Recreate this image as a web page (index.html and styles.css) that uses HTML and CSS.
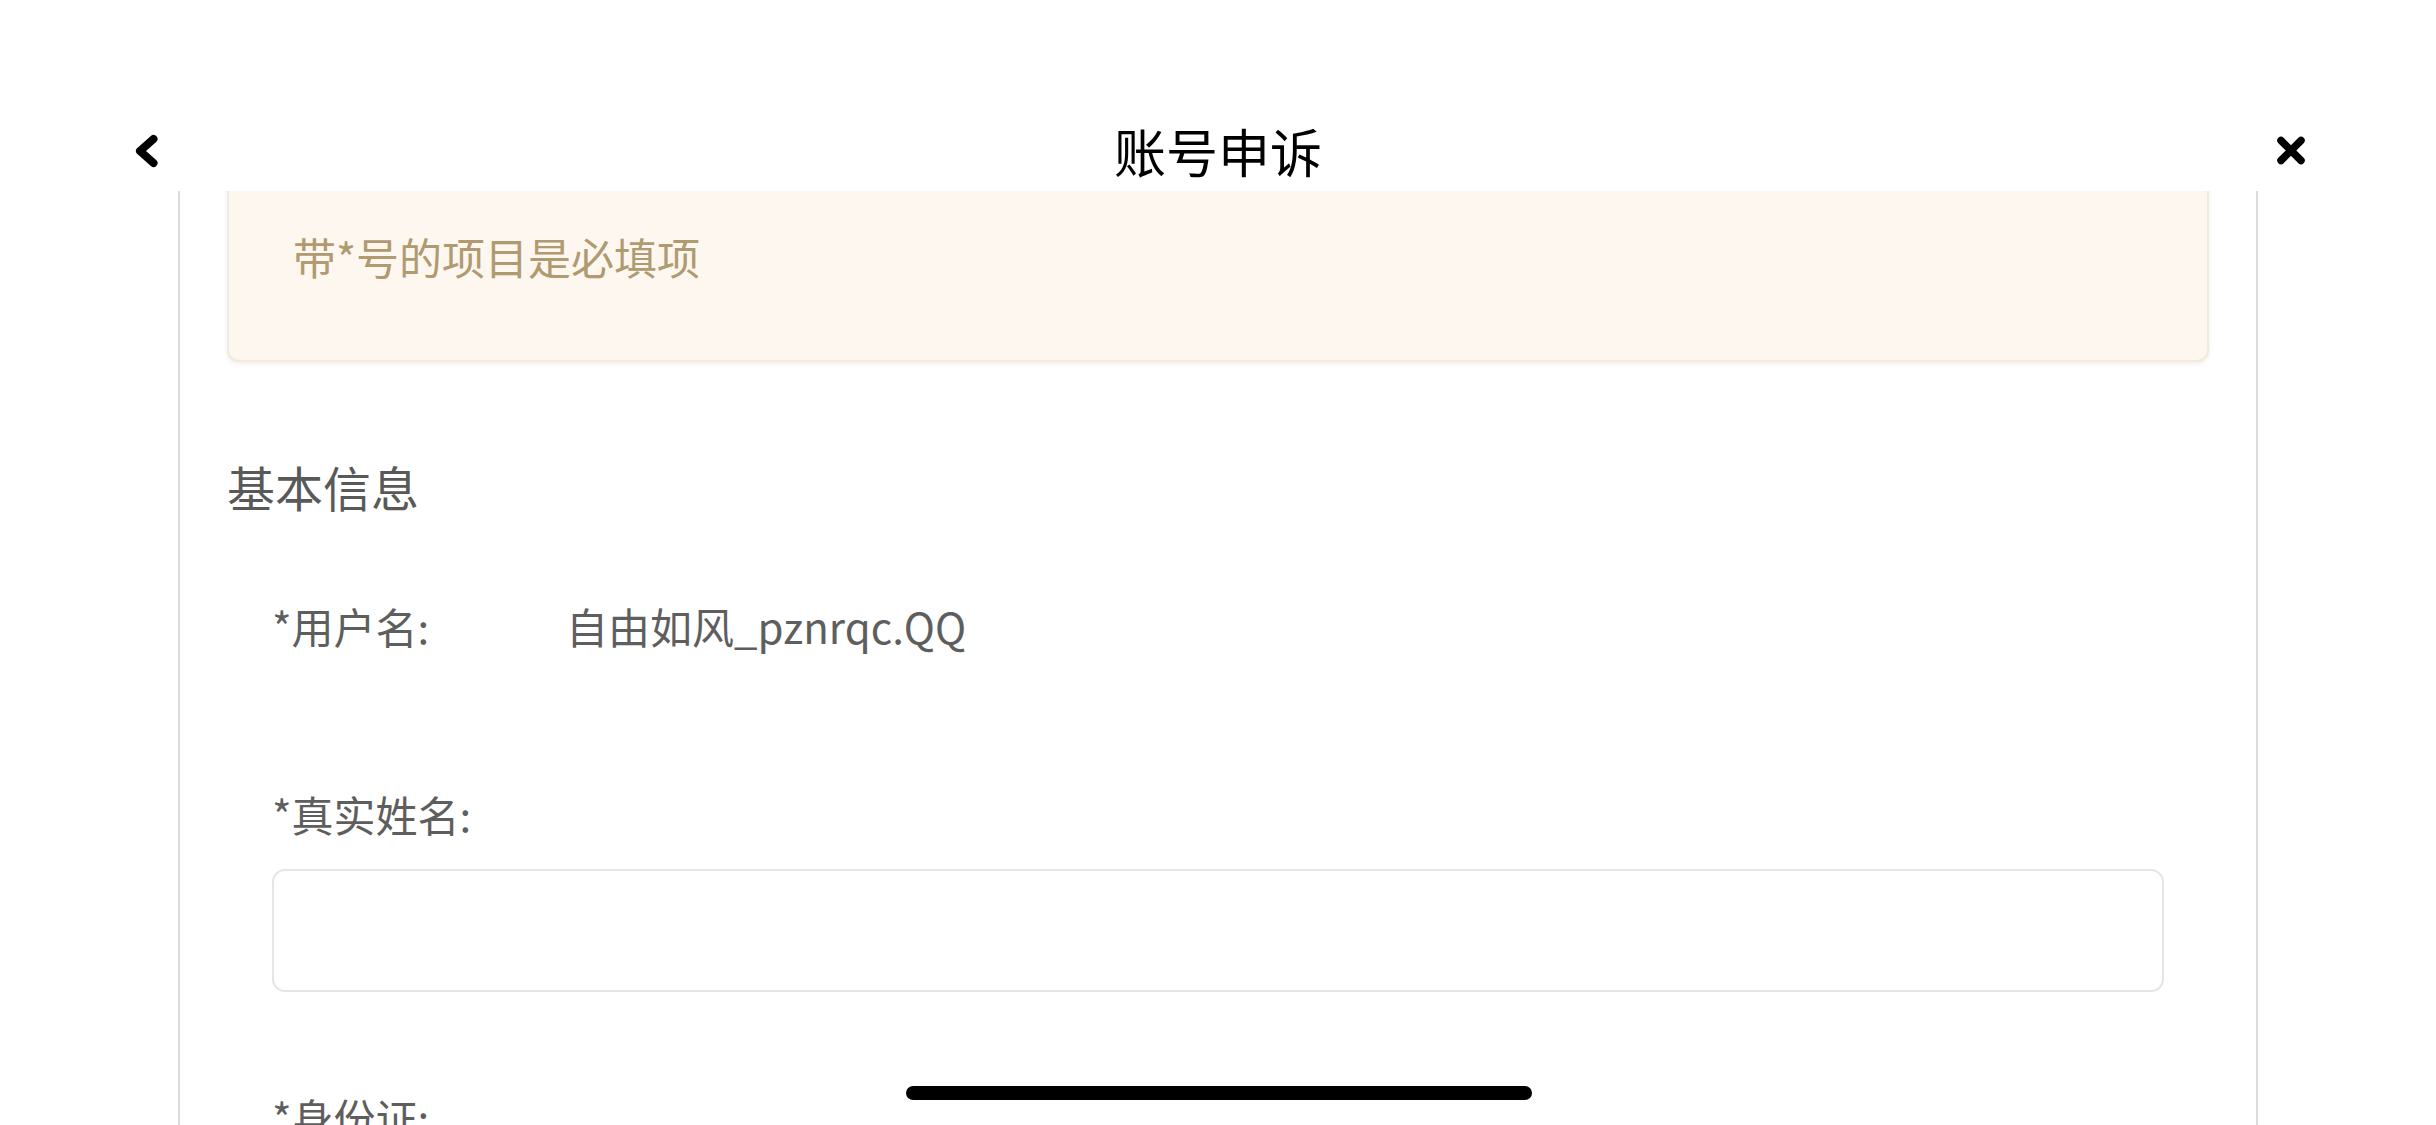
FILE: index.html
```html
<!DOCTYPE html>
<html lang="zh-CN">
<head>
<meta charset="utf-8">
<title>账号申诉</title>
<link rel="stylesheet" href="styles.css">
</head>
<body>
<div class="screen">
  <header class="topbar">
    <div class="nav">
      <div class="nav-btn nav-left">
        <svg class="icon-back" width="40" height="40" viewBox="0 0 40 40"><path d="M26.5 8 L13 20 L26.5 32" fill="none" stroke="#000" stroke-width="8" stroke-linecap="round" stroke-linejoin="round"/></svg>
      </div>
      <h1 class="nav-title">账号申诉</h1>
      <div class="nav-btn nav-right">
        <svg class="icon-close" width="40" height="40" viewBox="0 0 40 40"><path d="M10 9.5 L30 29.5 M30 9.5 L10 29.5" fill="none" stroke="#000" stroke-width="7.5" stroke-linecap="round"/></svg>
      </div>
    </div>
  </header>
  <main class="panel">
    <div class="notice">带*号的项目是必填项</div>
    <h2 class="section-title">基本信息</h2>
    <div class="row row-inline">
      <span class="label label-fixed">*用户名:</span>
      <span class="value">自由如风_pznrqc.QQ</span>
    </div>
    <div class="row row-stack">
      <label class="label">*真实姓名:</label>
      <div class="input"></div>
    </div>
    <div class="row row-stack row-next">
      <label class="label">*身份证:</label>
    </div>
  </main>
  <div class="home-indicator"></div>
</div>
</body>
</html>
```
FILE: styles.css
```css
* { box-sizing: border-box; }
html, body {
  margin: 0;
  padding: 0;
  background: #fff;
}
body {
  font-family: "Noto Sans CJK SC", "Noto Sans", sans-serif;
  width: 2436px;
  height: 1125px;
  overflow: hidden;
}
.screen {
  display: flex;
  flex-direction: column;
  height: 1125px;
}
.topbar {
  height: 191px;
  padding-top: 110px;
  background: #fff;
  flex: none;
  position: relative;
  z-index: 2;
}
.nav {
  height: 81px;
  display: grid;
  grid-template-columns: 1fr auto 1fr;
  align-items: center;
}
.nav-btn {
  display: flex;
  align-items: center;
  height: 81px;
}
.nav-left { padding-left: 127px; }
.nav-right { justify-content: flex-end; padding-right: 125px; }
.nav-title {
  margin: 0;
  font-size: 52px;
  font-weight: 400;
  color: #000;
  line-height: 81px;
}
.panel {
  flex: 1;
  margin: 0 178px;
  border-left: 2px solid #dcdcdc;
  border-right: 2px solid #dcdcdc;
  padding: 0 47px;
  overflow: hidden;
  background: #fff;
}
.notice {
  margin-top: -40px;
  padding: 64px;
  background: #fdf7f0;
  border: 2px solid #f2eadd;
  border-radius: 12px;
  box-shadow: 0 2px 4px rgba(120, 100, 60, 0.10);
  color: #b09a70;
  font-size: 43px;
  line-height: 79px;
}
.section-title {
  margin: 88px 0 0;
  font-size: 48px;
  font-weight: 400;
  line-height: 72px;
  color: #595959;
}
.row {
  padding: 0 45px;
  color: #5e5e5e;
  font-size: 42px;
  line-height: 63px;
}
.row-inline {
  display: flex;
  margin-top: 72px;
}
.label-fixed {
  width: 294px;
  flex: none;
}
.value { color: #5e5e5e; }
.row-stack {
  display: flex;
  flex-direction: column;
  margin-top: 125px;
}
.row-next { margin-top: 93px; }
.input {
  margin-top: 24px;
  height: 123px;
  border: 2px solid #e5e5e5;
  border-radius: 13px;
  background: #fff;
}
.home-indicator {
  position: fixed;
  left: 906px;
  top: 1086px;
  width: 626px;
  height: 14px;
  border-radius: 7px;
  background: #000;
  z-index: 5;
}
```
